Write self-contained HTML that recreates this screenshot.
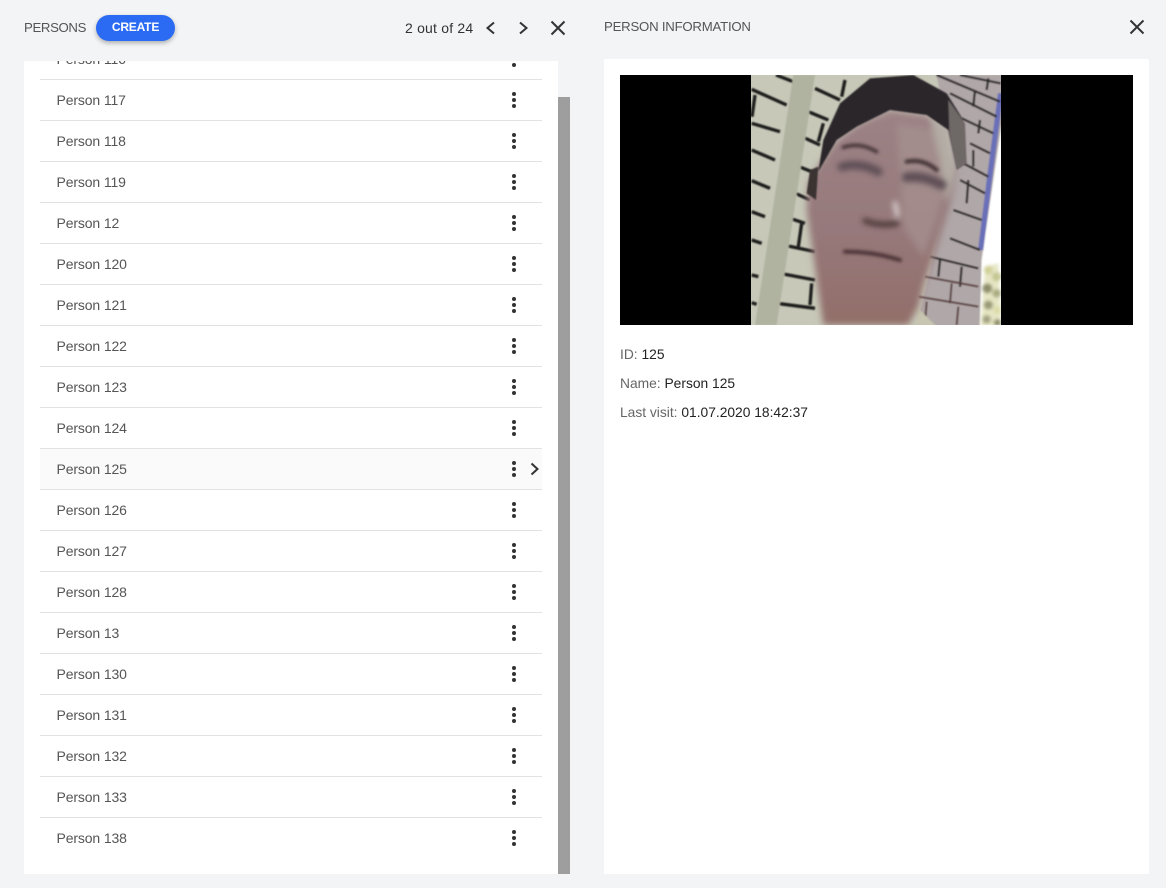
<!DOCTYPE html>
<html>
<head>
<meta charset="utf-8">
<style>
html,body{margin:0;padding:0;width:1166px;height:888px;overflow:hidden;background:#f3f4f6;font-family:"Liberation Sans",sans-serif;}
.a{position:absolute;white-space:nowrap;}
#left{position:absolute;left:24px;top:61px;width:534px;height:813px;background:#fff;overflow:hidden;}
#bar{position:absolute;left:558px;top:97px;width:12px;height:777px;background:#9e9e9e;}
#right{position:absolute;left:604px;top:59px;width:545px;height:815px;background:#fff;}
.r{position:absolute;left:16px;width:502px;height:40px;border-bottom:1px solid #e2e2e2;font-size:14px;line-height:40px;color:#555;letter-spacing:-.13px;}
.r span{position:absolute;left:16.5px;top:0;}
.r i{position:absolute;left:472px;top:18px;width:4px;height:4px;border-radius:2px;background:#333;box-shadow:0 -6px 0 #333,0 6px 0 #333;}
.info{position:absolute;left:620px;font-size:13.8px;line-height:16px;color:#666;white-space:nowrap;}
.info b{font-weight:normal;color:#222;}
</style>
</head>
<body>
<div class="a" style="left:24px;top:20px;font-size:13.2px;line-height:16px;color:#555;letter-spacing:-.35px;">PERSONS</div>
<div class="a" style="left:96px;top:15px;width:79px;height:26px;border-radius:13px;background:#2b6bf3;box-shadow:0 2px 5px rgba(0,0,0,.3);color:#fff;font-size:12px;font-weight:bold;line-height:25px;text-align:center;letter-spacing:-.2px;">CREATE</div>
<div class="a" style="left:405px;top:20px;font-size:14px;line-height:16px;color:#333;letter-spacing:.2px;">2 out of 24</div>
<svg class="a" style="left:0;top:0;" width="1166" height="60" fill="none" stroke="#333" stroke-width="2">
<path d="M494 22.5 L487.5 28 L494 33.5"/>
<path d="M520 22.5 L526.5 28 L520 33.5"/>
<path d="M551.5 21.5 L564.5 34.5 M564.5 21.5 L551.5 34.5"/>
<path d="M1130.5 20.5 L1143.5 33.5 M1143.5 20.5 L1130.5 33.5"/>
</svg>
<div class="a" style="left:604px;top:19px;font-size:13.2px;line-height:16px;color:#555;letter-spacing:-.22px;">PERSON INFORMATION</div>

<div id="left">
<div class="r" style="top:-22px;"><span>Person 116</span><i></i></div>
<div class="r" style="top:19px;"><span>Person 117</span><i></i></div>
<div class="r" style="top:60px;"><span>Person 118</span><i></i></div>
<div class="r" style="top:101px;"><span>Person 119</span><i></i></div>
<div class="r" style="top:142px;"><span>Person 12</span><i></i></div>
<div class="r" style="top:183px;"><span>Person 120</span><i></i></div>
<div class="r" style="top:224px;"><span>Person 121</span><i></i></div>
<div class="r" style="top:265px;"><span>Person 122</span><i></i></div>
<div class="r" style="top:306px;"><span>Person 123</span><i></i></div>
<div class="r" style="top:347px;"><span>Person 124</span><i></i></div>
<div class="r" style="top:388px;background:#fafafa;"><span>Person 125</span><i></i>
<svg style="position:absolute;left:488px;top:13px;" width="14" height="14" fill="none" stroke="#333" stroke-width="2"><path d="M3.5 1.5 L9.5 7 L3.5 12.5"/></svg></div>
<div class="r" style="top:429px;"><span>Person 126</span><i></i></div>
<div class="r" style="top:470px;"><span>Person 127</span><i></i></div>
<div class="r" style="top:511px;"><span>Person 128</span><i></i></div>
<div class="r" style="top:552px;"><span>Person 13</span><i></i></div>
<div class="r" style="top:593px;"><span>Person 130</span><i></i></div>
<div class="r" style="top:634px;"><span>Person 131</span><i></i></div>
<div class="r" style="top:675px;"><span>Person 132</span><i></i></div>
<div class="r" style="top:716px;"><span>Person 133</span><i></i></div>
<div class="r" style="top:757px;border-bottom:none;"><span>Person 138</span><i></i></div>
</div>
<div id="bar"></div>
<div id="right"></div>

<div class="a" style="left:620px;top:75px;width:513px;height:250px;background:#000;"></div>
<svg class="a" style="left:751px;top:75px;" width="250" height="250" viewBox="33 45 750 750">
<defs>
<filter id="b1" x="-10%" y="-10%" width="120%" height="120%"><feGaussianBlur stdDeviation="2.5"/></filter>
<filter id="b2" x="-10%" y="-10%" width="120%" height="120%"><feGaussianBlur stdDeviation="10"/></filter>
<filter id="b3" x="-30%" y="-30%" width="160%" height="160%"><feGaussianBlur stdDeviation="9"/></filter>
<filter id="b4" x="-30%" y="-30%" width="160%" height="160%"><feGaussianBlur stdDeviation="5"/></filter>
<linearGradient id="fg" x1="0" y1="0" x2="0" y2="1"><stop offset="0" stop-color="#9c8285"/><stop offset=".55" stop-color="#96797b"/><stop offset="1" stop-color="#926e69"/></linearGradient>
<clipPath id="c"><rect x="33" y="45" width="750" height="750"/></clipPath>
</defs>
<g clip-path="url(#c)">
<rect x="33" y="45" width="750" height="750" fill="#c7c8b8"/>
<g filter="url(#b1)">
<path d="M590 45 L785 45 L785 190 L725 600 L720 800 L530 800 L640 330 Z" fill="#b0a7a8"/>
<path d="M785 190 L725 600 L720 800 L790 800 Z" fill="#fff"/>
<path d="M782 100 L748 360 L722 570" stroke="#6a70b8" stroke-width="16" fill="none"/>
<g stroke="#1c1c1a" stroke-width="10" fill="none">
<path d="M35 88 L140 135M35 190 L120 215M35 270 L105 300M35 362 L90 385M35 455 L75 470M35 540 L65 550M35 645 L55 650M35 728 L50 733"/>
<path d="M108 45 L160 65M225 85 L300 120M205 155 L265 180M185 230 L240 255M165 315 L215 335M155 395 L210 420M135 470 L195 490M130 555 L225 575M120 640 L225 660M110 730 L225 745"/>
<path d="M45 105 L36 170M315 60 L305 110M250 190 L235 245M185 490 L175 560M215 670 L210 735"/>
</g>
<g stroke="#2e2a2c" stroke-width="7" fill="none">
<path d="M590 45 L780 125M660 45 L782 70M630 100 L770 170M665 175 L760 220M690 250 L750 280M670 310 L745 350M660 360 L735 400M640 450 L725 480M630 535 L720 570M570 590 L715 625"/>
<path d="M705 90 L700 140M745 55 L740 90M700 270 L700 320M685 360 L680 430M600 600 L595 650M665 620 L660 680M720 180 L715 220"/>
</g>
<g stroke="#5a3f40" stroke-width="6" fill="none">
<path d="M555 650 L715 680M535 710 L715 740M635 670 L630 730M560 725 L555 790M655 740 L650 795"/>
</g>
<path d="M160 45 L225 45 L110 795 L45 795 Z" fill="#b1b3a1"/>
<path d="M530 795 L535 745 L590 800 Z" fill="#c8c6b0"/>
</g>
<g filter="url(#b4)">
<path d="M735 620 L775 610 L785 800 L722 800 Z" fill="#e6e6c4"/>
<circle cx="745" cy="630" r="13" fill="#d0d09a"/><circle cx="770" cy="650" r="14" fill="#c4c792"/>
<circle cx="742" cy="685" r="15" fill="#8d8e6a"/><circle cx="770" cy="700" r="13" fill="#a9aa80"/>
<circle cx="745" cy="735" r="14" fill="#9a9a78"/><circle cx="772" cy="750" r="12" fill="#dcdca8"/>
<circle cx="740" cy="778" r="13" fill="#a4a484"/><circle cx="772" cy="788" r="11" fill="#8e8e6e"/>
</g>
<g filter="url(#b2)">
<path d="M205 370 L240 310 L290 240 L360 190 L450 150 L560 165 L620 210 L650 330 L635 420 L597 540 L550 680 L535 740 L505 795 L250 795 L225 620 L200 450 Z" fill="url(#fg)"/>
<path d="M470 190 L600 210 L630 330 L590 480 L550 590 L490 500 Z" fill="#a5908f" opacity=".75"/>
<path d="M570 170 L625 200 L645 330 L620 430 L600 300 Z" fill="#b3aca4"/>
</g>
<g filter="url(#b1)">
<path d="M235 335 L250 240 L300 130 L390 55 L520 45 L620 100 L670 180 L680 310 L650 330 L625 210 L560 165 L450 150 L350 200 L290 240 Z" fill="#2c252a"/>
<path d="M625 120 L675 190 L680 310 L650 330 L628 215 Z" fill="#6e6766"/>
<path d="M210 330 L235 320 L228 420 L200 400 Z" fill="#3a3232"/>
</g>
<g filter="url(#b3)" fill="none" stroke-linecap="round">
<path d="M305 320 Q360 305 415 335" stroke="#5f4f57" stroke-width="26"/>
<path d="M500 352 Q550 345 605 375" stroke="#5f4f57" stroke-width="30"/>
<path d="M375 482 Q420 500 470 490" stroke="#4a3436" stroke-width="16"/>
<path d="M465 430 L472 465" stroke="#d8cfcf" stroke-width="14"/>
</g>
<g filter="url(#b4)" fill="none" stroke-linecap="round">
<path d="M310 262 Q360 245 410 275" stroke="#443439" stroke-width="11"/>
<path d="M500 305 Q550 295 590 330" stroke="#443439" stroke-width="13"/>
<path d="M315 575 Q400 575 480 600" stroke="#4a3034" stroke-width="12"/>
</g>
</g>
</svg>

<div class="info" style="top:347px;">ID: <b>125</b></div>
<div class="info" style="top:376px;">Name: <b>Person 125</b></div>
<div class="info" style="top:405px;">Last visit: <b>01.07.2020 18:42:37</b></div>
</body>
</html>
